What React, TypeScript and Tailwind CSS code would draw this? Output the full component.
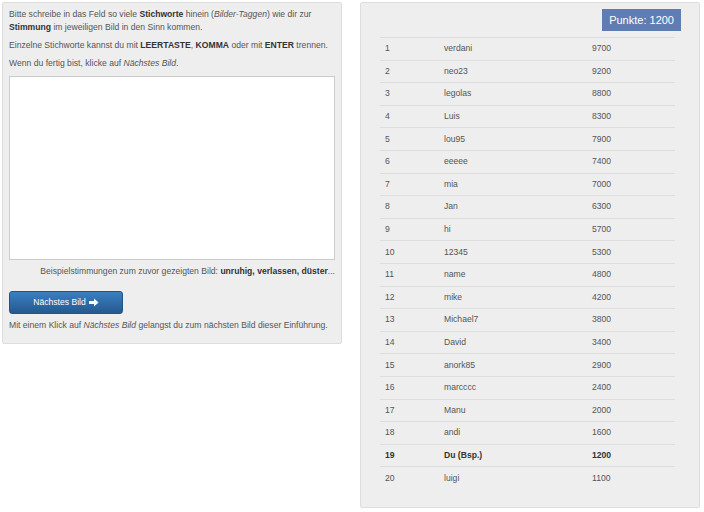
import React from "react";

const rows: [number, string, number][] = [
  [1, "verdani", 9700],
  [2, "neo23", 9200],
  [3, "legolas", 8800],
  [4, "Luis", 8300],
  [5, "lou95", 7900],
  [6, "eeeee", 7400],
  [7, "mia", 7000],
  [8, "Jan", 6300],
  [9, "hi", 5700],
  [10, "12345", 5300],
  [11, "name", 4800],
  [12, "mike", 4200],
  [13, "Michael7", 3800],
  [14, "David", 3400],
  [15, "anork85", 2900],
  [16, "marcccc", 2400],
  [17, "Manu", 2000],
  [18, "andi", 1600],
  [19, "Du (Bsp.)", 1200],
  [20, "luigi", 1100],
];

export default function App() {
  return (
    <div
      className="w-[704px] h-[512px] bg-white flex items-start gap-[18px] pl-[2px] pt-[2px] text-[#555] text-[8.6px] leading-[13px]"
      style={{ fontFamily: '"Liberation Sans", Arial, sans-serif' }}
    >
      {/* Left panel */}
      <div className="w-[340px] h-[342px] bg-[#eeeeee] border border-[#dddddd] rounded-[2px] px-[6px] pt-[5px]">
        <p>
          Bitte schreibe in das Feld so viele <b className="text-[#333]">Stichworte</b> hinein (<i>Bilder-Taggen</i>) wie dir zur{" "}
          <b className="text-[#333]">Stimmung</b> im jeweiligen Bild in den Sinn kommen.
        </p>
        <p className="mt-[5px]">
          Einzelne Stichworte kannst du mit <b className="text-[#333]">LEERTASTE</b>, <b className="text-[#333]">KOMMA</b> oder mit{" "}
          <b className="text-[#333]">ENTER</b> trennen.
        </p>
        <p className="mt-[5px]">
          Wenn du fertig bist, klicke auf <i>Nächstes Bild</i>.
        </p>
        <div className="mt-[6px] h-[184px] w-[326px] bg-white border border-[#cccccc]" />
        <p className="mt-[5px] text-right w-[326px]">
          Beispielstimmungen zum zuvor gezeigten Bild: <b className="text-[#333]">unruhig, verlassen, düster</b>...
        </p>
        <button
          className="mt-[13px] w-[114px] h-[23px] rounded-[3px] border border-[#245580] text-white text-[8.6px] flex items-center justify-center gap-[3px] bg-gradient-to-b from-[#3a80c2] to-[#25598f]"
        >
          <span>Nächstes Bild</span>
          <svg width="10" height="9" viewBox="0 0 10 9" fill="white">
            <path d="M0 3h5V0.5L9.5 4.5 5 8.5V6H0z" />
          </svg>
        </button>
        <p className="mt-[5px]">
          Mit einem Klick auf <i>Nächstes Bild</i> gelangst du zum nächsten Bild dieser Einführung.
        </p>
      </div>

      {/* Right panel */}
      <div className="w-[340px] h-[506px] bg-[#eeeeee] border border-[#dddddd] rounded-[2px] pl-[19px] pr-[18px] pt-[6px]">
        <div className="flex justify-end">
          <div className="bg-[#5f7db3] text-white text-[11px] leading-[22px] h-[22px] px-[7px]">Punkte: 1200</div>
        </div>
        <div className="mt-[6px] w-[295px]">
          {rows.map(([rank, name, score]) => {
            const bold = rank === 19;
            return (
              <div
                key={rank}
                className={`flex items-center h-[22.6px] border-t border-[#dddddd] ${bold ? "font-bold text-[#333]" : ""}`}
              >
                <span className="w-[64px] pl-[5px]">{rank}</span>
                <span className="w-[148px]">{name}</span>
                <span>{score}</span>
              </div>
            );
          })}
        </div>
      </div>
    </div>
  );
}
